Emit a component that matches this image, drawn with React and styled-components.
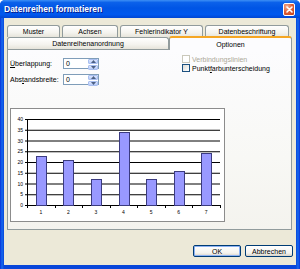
import React from 'react';
import styled, { createGlobalStyle } from 'styled-components';

const Global = createGlobalStyle`
  html, body { margin: 0; padding: 0; background: #ffffff; }
  body {
    width: 300px; height: 269px; overflow: hidden;
    font-family: "Liberation Sans", Arial, sans-serif;
    -webkit-font-smoothing: antialiased;
  }
`;

const Window = styled.div`
  width: 300px; height: 269px; box-sizing: border-box;
  display: flex; flex-direction: column;
  background: linear-gradient(to right, #0831D9 0px, #166AEE 2px, #0846DA 4px, #0846DA 296px, #166AEE 298px, #0831D9 300px);
  border-radius: 5px 5px 0 0;
  overflow: hidden;
`;

const TitleBar = styled.div`
  height: 18px; flex: none;
  display: flex; align-items: center; justify-content: space-between;
  padding: 0 5px 0 4px;
  background: linear-gradient(to bottom, #3D8FF5 0%, #0B61EA 14%, #0055E5 45%, #0058EE 80%, #0046D3 100%);
`;

const Title = styled.span`
  color: #ffffff; font-weight: bold; font-size: 8.5px;
  text-shadow: 1px 1px 0 #0A1A8C;
  white-space: nowrap;
`;

const CloseBtn = styled.div`
  width: 12px; height: 13px; box-sizing: border-box;
  border: 1px solid #ffffff; border-radius: 2px;
  background: radial-gradient(circle at 30% 25%, #F3B29A 0%, #E0633B 45%, #C13F17 100%);
  display: flex; align-items: center; justify-content: center;
`;

const Body = styled.div`
  flex: 1; margin: 0 4px 4px;
  background: #ECE9D8;
  display: flex; flex-direction: column;
  padding: 7px 3px 0 3px;
`;

const TabRow = styled.div`
  display: flex; gap: 2px; height: 12px; align-items: flex-end;
`;

const Tab = styled.div`
  box-sizing: border-box;
  width: ${p => p.$w}px; height: ${p => (p.$active ? 14 : 12)}px;
  margin-bottom: ${p => (p.$active ? -1 : 0)}px;
  position: relative; z-index: ${p => (p.$active ? 2 : 0)};
  border: 1px solid #919B9C; border-bottom: none;
  border-top: ${p => (p.$active ? '2px solid #F5A623' : '1px solid #919B9C')};
  border-radius: 3px 3px 0 0;
  background: ${p => (p.$active ? '#FCFCFE' : 'linear-gradient(to bottom, #FFFFFF 0%, #F4F3EE 60%, #E6E4DA 100%)')};
  font-size: 7px; color: #000;
  display: flex; align-items: center; justify-content: center;
  white-space: nowrap; line-height: 1;
`;

const Panel = styled.div`
  box-sizing: border-box; height: 181px; margin-right: 1px;
  border: 1px solid #919B9C;
  background: linear-gradient(to bottom, #FCFCFE 0%, #F8F8F5 60%, #F4F3EE 100%);
  display: flex; flex-direction: column;
  padding: 5px 0 7px 2px;
`;

const TopSection = styled.div`
  display: grid; grid-template-columns: 172px 1fr;
`;

const Fields = styled.div`
  display: flex; flex-direction: column; gap: 5px; padding-top: 3px;
`;

const FieldRow = styled.div`
  display: flex; align-items: center; height: 11px;
`;

const Label = styled.span`
  width: 53px; font-size: 7px; color: #000; white-space: nowrap;
`;

const U = styled.span`text-decoration: underline;`;

const SpinBox = styled.div`
  display: flex; box-sizing: border-box; width: 36px; height: 11px;
  border: 1px solid #7F9DB9; background: #fff;
`;

const SpinInput = styled.div`
  flex: 1; font-size: 7px; line-height: 9px; padding-left: 2px; color: #000;
`;

const SpinButtons = styled.div`
  width: 10px; display: flex; flex-direction: column; gap: 1px; padding: 0 0 0 0;
`;

const SpinBtn = styled.div`
  flex: 1; border-radius: 1px;
  background: linear-gradient(to bottom, #DCE6FD, #B7CBF8);
  border: 1px solid #A9BFF0; box-sizing: border-box;
  display: flex; align-items: center; justify-content: center;
`;

const Checks = styled.div`
  display: flex; flex-direction: column; gap: 1px;
`;

const CheckRow = styled.div`
  display: flex; align-items: center; gap: 2px; height: 8px;
  font-size: 7px; color: ${p => (p.$disabled ? '#ACA899' : '#000')};
  white-space: nowrap;
`;

const CheckBox = styled.div`
  width: 8px; height: 8px; box-sizing: border-box;
  border: 1px solid ${p => (p.$disabled ? '#CAC8BB' : '#1C5180')};
  background: ${p => (p.$disabled ? '#FFFFFF' : 'linear-gradient(135deg, #DCDCD7, #FFFFFF)')};
`;

const ChartBox = styled.div`
  margin-top: auto; box-sizing: border-box;
  width: 215px; height: 114px;
  border: 1px solid #8C8C8C; background: #ffffff;
  display: flex;
`;

const Footer = styled.div`
  display: flex; justify-content: flex-end; gap: 4px;
  margin-top: 15px;
`;

const Button = styled.div`
  box-sizing: border-box; width: 48px; height: 12px;
  border: 1px solid #003C74; border-radius: 2px;
  background: linear-gradient(to bottom, #FFFFFF 0%, #F4F3EE 70%, #D8D2C6 100%);
  box-shadow: ${p => (p.$default ? 'inset 0 0 0 1px #8DB2F3' : 'none')};
  font-size: 7px; color: #000;
  display: flex; align-items: center; justify-content: center;
`;

const values = [23, 21, 12, 34, 12, 16, 24];

function Chart() {
  const x0 = 16, x1 = 209, yTop = 10, yBot = 96;
  const sc = (yBot - yTop) / 40;
  const cw = (x1 - x0) / 7;
  const grid = [0, 5, 10, 15, 20, 25, 30, 35, 40];
  return (
    <svg width="213" height="112" viewBox="0 0 213 112">
      {grid.map(v => {
        const y = yBot - v * sc;
        return (
          <g key={v}>
            <line x1={x0 - 2} x2={x1} y1={y + 0.5} y2={y + 0.5} stroke="#000" strokeWidth="1" />
            <text x={12} y={y + 2} fontSize="5" textAnchor="end" fill="#000" fontFamily="Liberation Sans, Arial, sans-serif">{v}</text>
          </g>
        );
      })}
      <line x1={x0 + 0.5} x2={x0 + 0.5} y1={yTop} y2={yBot + 1} stroke="#000" strokeWidth="1" />
      {Array.from({ length: 8 }).map((_, i) => (
        <line key={i} x1={Math.round(x0 + i * cw) + 0.5} x2={Math.round(x0 + i * cw) + 0.5} y1={yBot} y2={yBot + 3} stroke="#000" strokeWidth="1" />
      ))}
      {values.map((v, i) => {
        const cx = x0 + (i + 0.5) * cw;
        const h = v * sc;
        return (
          <g key={i}>
            <rect x={Math.round(cx - 5) + 0.5} y={Math.round(yBot - h) + 0.5} width="10" height={Math.round(h)} fill="#9999FF" stroke="#3B3B80" strokeWidth="1" />
            <text x={cx} y={105} fontSize="5" textAnchor="middle" fill="#000" fontFamily="Liberation Sans, Arial, sans-serif">{i + 1}</text>
          </g>
        );
      })}
    </svg>
  );
}

function Spin() {
  return (
    <SpinBox>
      <SpinInput>0</SpinInput>
      <SpinButtons>
        <SpinBtn>
          <svg width="5" height="3" viewBox="0 0 5 3"><path d="M0 3 L2.5 0 L5 3 Z" fill="#4D6185" /></svg>
        </SpinBtn>
        <SpinBtn>
          <svg width="5" height="3" viewBox="0 0 5 3"><path d="M0 0 L2.5 3 L5 0 Z" fill="#4D6185" /></svg>
        </SpinBtn>
      </SpinButtons>
    </SpinBox>
  );
}

export default function App() {
  return (
    <>
      <Global />
      <Window>
        <TitleBar>
          <Title>Datenreihen formatieren</Title>
          <CloseBtn>
            <svg width="7" height="7" viewBox="0 0 7 7">
              <path d="M1 1 L6 6 M6 1 L1 6" stroke="#ffffff" strokeWidth="1.6" strokeLinecap="round" />
            </svg>
          </CloseBtn>
        </TitleBar>
        <Body>
          <TabRow>
            <Tab $w={53}>Muster</Tab>
            <Tab $w={56}>Achsen</Tab>
            <Tab $w={83}>Fehlerindikator Y</Tab>
            <Tab $w={84}>Datenbeschriftung</Tab>
          </TabRow>
          <TabRow style={{ gap: 0 }}>
            <Tab $w={162}>Datenreihenanordnung</Tab>
            <Tab $w={123} $active>Optionen</Tab>
          </TabRow>
          <Panel>
            <TopSection>
              <Fields>
                <FieldRow>
                  <Label><U>Ü</U>berlappung:</Label>
                  <Spin />
                </FieldRow>
                <FieldRow>
                  <Label>Abs<U>t</U>andsbreite:</Label>
                  <Spin />
                </FieldRow>
              </Fields>
              <Checks>
                <CheckRow $disabled>
                  <CheckBox $disabled />
                  <span>Verbindungslinien</span>
                </CheckRow>
                <CheckRow>
                  <CheckBox />
                  <span>Punkt<U>f</U>arbunterscheidung</span>
                </CheckRow>
              </Checks>
            </TopSection>
            <ChartBox>
              <Chart />
            </ChartBox>
          </Panel>
          <Footer>
            <Button $default>OK</Button>
            <Button>Abbrechen</Button>
          </Footer>
        </Body>
      </Window>
    </>
  );
}
